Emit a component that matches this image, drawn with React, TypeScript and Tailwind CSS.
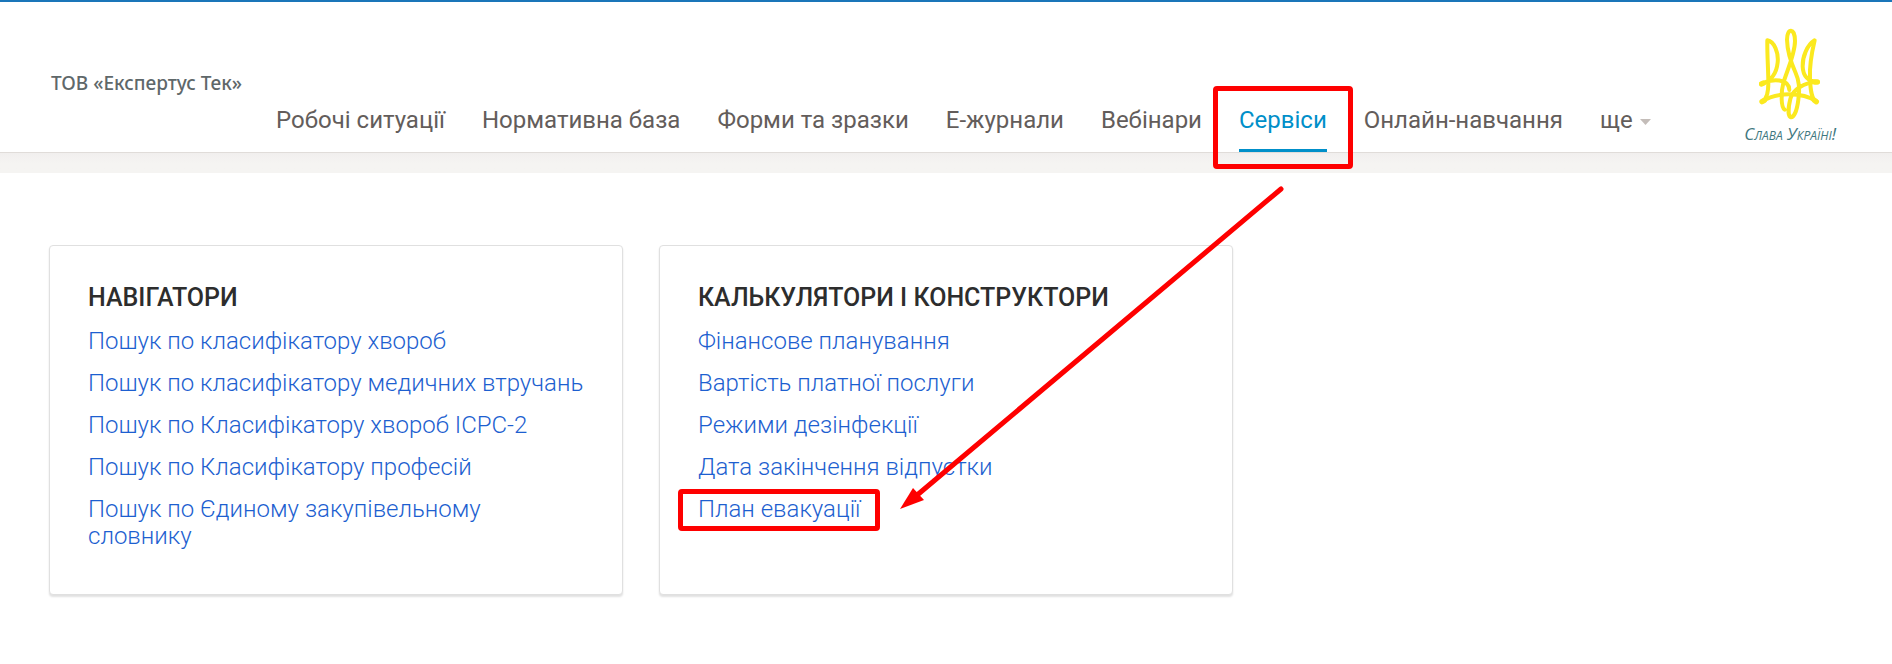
import { clsx } from "clsx";

type NavItem = { label: string; active?: boolean };

const navItems: NavItem[] = [
  { label: "Робочі ситуації" },
  { label: "Нормативна база" },
  { label: "Форми та зразки" },
  { label: "Е-журнали" },
  { label: "Вебінари" },
  { label: "Сервіси", active: true },
  { label: "Онлайн-навчання" },
];

type Section = { title: string; links: string[]; marked?: string };

const sections: Section[] = [
  {
    title: "Навігатори",
    links: [
      "Пошук по класифікатору хвороб",
      "Пошук по класифікатору медичних втручань",
      "Пошук по Класифікатору хвороб ІСРС-2",
      "Пошук по Класифікатору професій",
      "Пошук по Єдиному закупівельному словнику",
    ],
  },
  {
    title: "Калькулятори і конструктори",
    links: [
      "Фінансове планування",
      "Вартість платної послуги",
      "Режими дезінфекції",
      "Дата закінчення відпустки",
      "План евакуації",
    ],
    marked: "План евакуації",
  },
];

const Trident = () => (
  <svg viewBox="60 25 186 276" className="h-[92px] w-[62px]" fill="none" stroke="#fbe91f" strokeWidth="12" strokeLinecap="round" strokeLinejoin="round">
    {/* left blade */}
    <path d="M70 245C84 238 88 215 88 190C88 150 84 100 85 62C106 66 119 98 116 128C113 158 102 182 68 192C100 176 150 176 151 211" />
    {/* right blade */}
    <path d="M232 245C216 238 214 205 213 175C211 140 218 100 227 62C204 76 190 112 191 140C192 168 204 184 236 187" />
    {/* middle loops */}
    <path d="M137 270C125 262 126 215 133 190C141 160 168 105 168 64C168 24 144 24 144 60C145 100 160 138 170 160C184 190 182 215 178 240C174 272 166 292 156 293C146 290 148 262 154 238C160 212 194 187 236 187" />
    {/* crossbar */}
    <path d="M70 245C110 217 190 217 232 245" />
    <path d="M67 193L74 190M228 187L235 187M69 246L76 242M226 242L232 246" strokeWidth="16" />
  </svg>
);

const Header = () => (
  <header className="relative flex border-t-2 border-b border-t-[#1a76b9] border-b-[#e0dcd9] bg-white pr-14 pl-[51px]">
    <a href="#" className="mt-[69px] font-['Noto_Sans',sans-serif] text-[19px] leading-6 font-medium whitespace-nowrap text-[#5f686a]">
      ТОВ «Експертус Тек»
    </a>
    <nav className="mt-[100px] ml-[34px] flex gap-[37px] text-2xl leading-9 text-[#635d5b]">
      {navItems.map((item) => (
        <a
          key={item.label}
          href="#"
          className={clsx("relative h-[50px] whitespace-nowrap", item.active && "border-b-3 border-[#008fc9] text-[#008fc9]")}
        >
          {item.label}
          {item.active && <span className="absolute -inset-x-[26px] -top-4 -bottom-5 rounded-sm border-5 border-[#fe0000]" />}
        </a>
      ))}
      <button type="button" className="flex h-9 items-center gap-[7px]">
        ще
        <svg viewBox="0 0 11 6" className="mt-1 h-[6px] w-[11px]" fill="#c4bdb9">
          <path d="M0 0h11L5.500 6z" />
        </svg>
      </button>
    </nav>
    <div className="mt-[26px] ml-auto flex flex-col items-center">
      <Trident />
      <span className="mt-1 font-['Open_Sans',sans-serif] text-[17px] leading-5 font-medium whitespace-nowrap text-[#3f7880] italic [font-variant-caps:small-caps]">
        Слава Україні!
      </span>
    </div>
  </header>
);

const Card = ({ section }: { section: Section }) => (
  <section className="rounded-sm border border-[#e0e0e0] bg-white px-[38px] pt-[38px] pb-11 shadow-[0_2px_2px_rgba(0,0,0,0.12)]">
    <h2 className="text-[25px] leading-7 font-medium text-[#2d2d2d] uppercase">{section.title}</h2>
    <ul className="mt-4 flex flex-col gap-[15px] text-2xl leading-[27px] font-light text-[#1d5fd0]">
      {section.links.map((link) => (
        <li key={link}>
          <a href="#" className="relative inline-block">
            {link}
            {link === section.marked && <span className="absolute -inset-x-5 -top-[7px] -bottom-2 rounded-sm border-5 border-[#fe0000]" />}
          </a>
        </li>
      ))}
    </ul>
  </section>
);

// Points from the active menu item down to the marked link
const Arrow = () => (
  <svg viewBox="0 0 390 330" className="pointer-events-none absolute top-[184px] left-[896px] h-[330px] w-[390px]" fill="#fe0000">
    <path d="M385 5L20 312" stroke="#fe0000" strokeWidth="5" strokeLinecap="round" />
    <path d="M4 325L17 304L28 316Z" />
  </svg>
);

export default function App() {
  return (
    <div className="relative min-h-screen bg-white font-[Roboto,sans-serif]">
      <Header />
      <div className="h-5 bg-linear-to-b from-[#f1efee] to-[#f5f4f2] to-50%" />
      <main className="grid grid-cols-3 gap-9 px-[49px] pt-[72px] pb-16">
        {sections.map((section) => (
          <Card key={section.title} section={section} />
        ))}
      </main>
      <Arrow />
    </div>
  );
}
